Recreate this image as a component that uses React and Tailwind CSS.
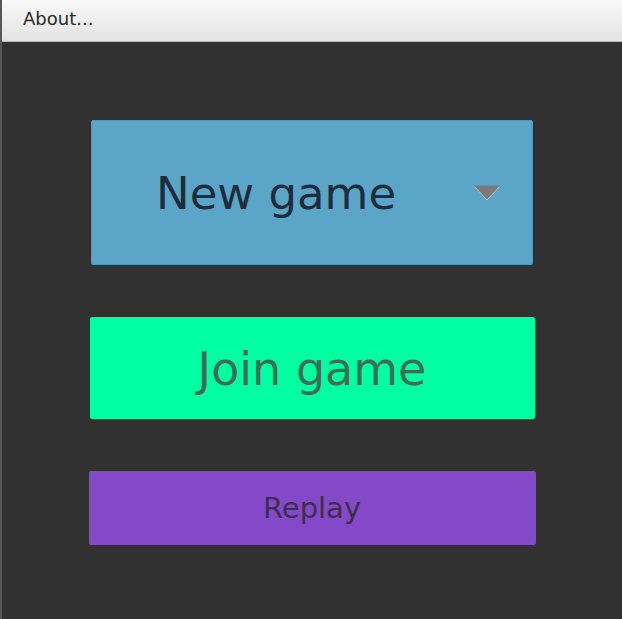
const FONT = { fontFamily: '"DejaVu Sans", "Liberation Sans", sans-serif' }

export default function App() {
  return (
    <div className="w-[622px] h-[619px] flex flex-col bg-[#313131] border-l-2 border-[#575757] overflow-hidden" style={FONT}>
      {/* Menu bar */}
      <div className="h-[42px] shrink-0 flex items-center px-[21px] bg-gradient-to-b from-[#f9f9f9] to-[#e3e3e3] border-b border-[#bcbcbc]">
        <span className="text-[18px] text-[#2a2a2a] leading-none -mt-[4px]">About...</span>
      </div>

      <main className="flex flex-col items-center pt-[78px]">
        {/* New game combo */}
        <button className="w-[442px] h-[145px] flex items-center bg-[#5ba5c8] border border-[#5099bf] rounded-[2px] pl-[64px] pr-[31px]">
          <span className="text-[45px] text-[#1f2c3b] leading-none mt-[2px]">New game</span>
          <svg className="ml-auto mt-[1px]" width="28" height="16" viewBox="0 0 28 16">
            <path d="M1 1 L27 1 L14 15 Z" fill="#7a7a7a" />
            <path d="M1 1 L14 15 L27 1" fill="none" stroke="#c9c9c9" strokeWidth="0.8" />
            <path d="M1 1 L27 1" stroke="#7a7a7a" strokeWidth="1" />
          </svg>
        </button>

        <button className="mt-[52px] w-[445px] h-[102px] flex items-center justify-center bg-[#00ffa1] rounded-[2px]">
          <span className="text-[46px] text-[#3e6d55] leading-none mt-[2px]">Join game</span>
        </button>

        <button className="mt-[52px] w-[447px] h-[74px] flex items-center justify-center bg-[#8449c8] rounded-[2px]">
          <span className="text-[29px] text-[#3c2e4c] leading-none mt-[1px]">Replay</span>
        </button>
      </main>
    </div>
  )
}
